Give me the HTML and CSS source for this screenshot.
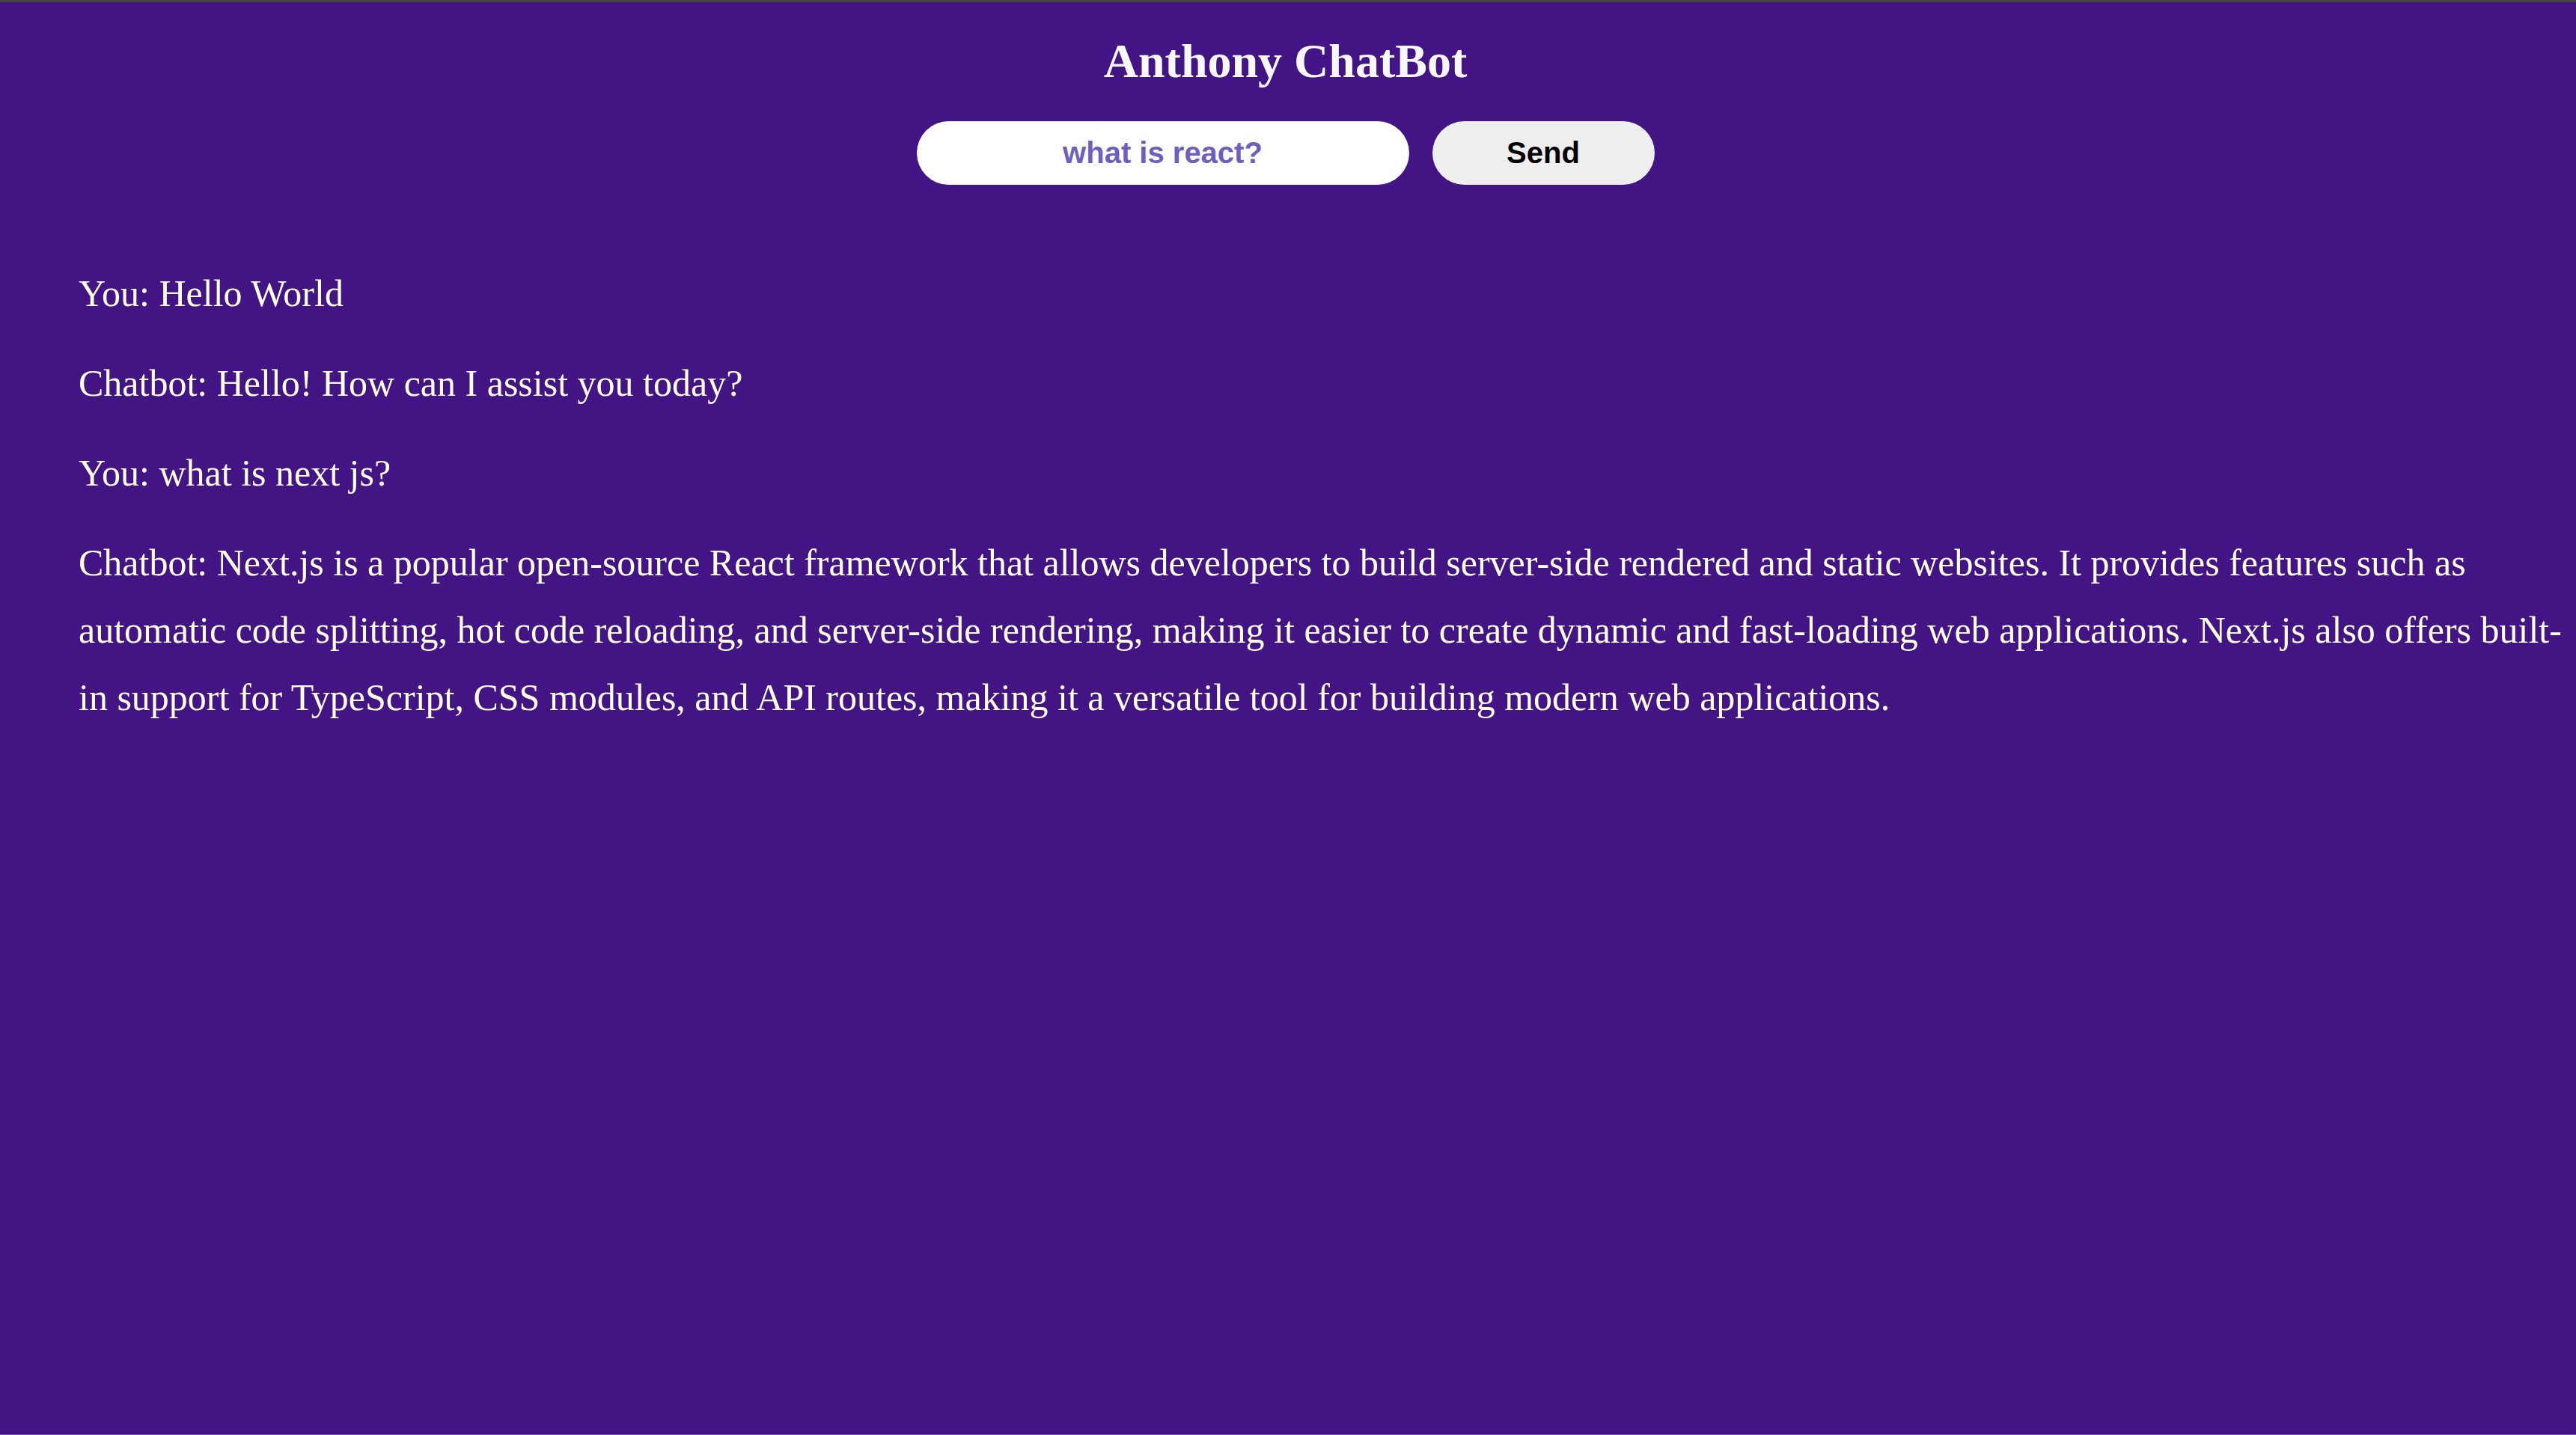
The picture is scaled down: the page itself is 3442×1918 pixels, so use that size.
FILE: index.html
```html
<!DOCTYPE html>
<html lang="en">
<head>
<meta charset="utf-8">
<title>Anthony ChatBot</title>
<link rel="stylesheet" href="styles.css">
</head>
<body>
<div class="app">
  <header class="header">
    <h1 class="title">Anthony ChatBot</h1>
    <form class="composer">
      <input class="composer-input" type="text" value="what is react?">
      <button class="composer-send" type="button">Send</button>
    </form>
  </header>
  <main class="chat">
    <p class="msg">You: Hello World</p>
    <p class="msg">Chatbot: Hello! How can I assist you today?</p>
    <p class="msg">You: what is next js?</p>
    <p class="msg">Chatbot: Next.js is a popular open-source React framework that allows developers to build server-side rendered and static websites. It provides features such as automatic code splitting, hot code reloading, and server-side rendering, making it easier to create dynamic and fast-loading web applications. Next.js also offers built-in support for TypeScript, CSS modules, and API routes, making it a versatile tool for building modern web applications.</p>
  </main>
</div>
</body>
</html>
```

FILE: styles.css
```css
html, body {
  margin: 0;
  padding: 0;
  height: 100%;
}

body {
  background: #431584;
  font-family: "Liberation Serif", "Times New Roman", serif;
}

.app {
  box-sizing: border-box;
  min-height: 100%;
  border-top: 3px solid #464646;
  border-bottom: 1px solid #6a4fa8;
}

.header {
  display: flex;
  flex-direction: column;
  align-items: center;
  padding-right: 7px;
}

.title {
  margin: 42px 0 0;
  font-family: "Liberation Serif", "Times New Roman", serif;
  font-weight: bold;
  font-size: 64px;
  line-height: 73px;
  color: #f6f7ff;
}

.composer {
  display: flex;
  gap: 31px;
  margin-top: 44px;
}

.composer-input {
  box-sizing: border-box;
  width: 658px;
  height: 85px;
  border: none;
  border-radius: 43px;
  background: #ffffff;
  padding: 0 30px;
  font-family: "Liberation Sans", Arial, sans-serif;
  font-weight: bold;
  font-size: 40px;
  color: #6d60bb;
  text-align: center;
  outline: none;
}

.composer-send {
  box-sizing: border-box;
  width: 297px;
  height: 85px;
  border: none;
  border-radius: 43px;
  background: #eeeeee;
  font-family: "Liberation Sans", Arial, sans-serif;
  font-weight: bold;
  font-size: 40px;
  color: #000000;
  padding: 0;
}

.chat {
  padding: 70px 10px 0 105px;
}

.msg {
  margin: 30px 0;
  font-size: 50px;
  line-height: 90px;
  color: #fdfedf;
}
```
